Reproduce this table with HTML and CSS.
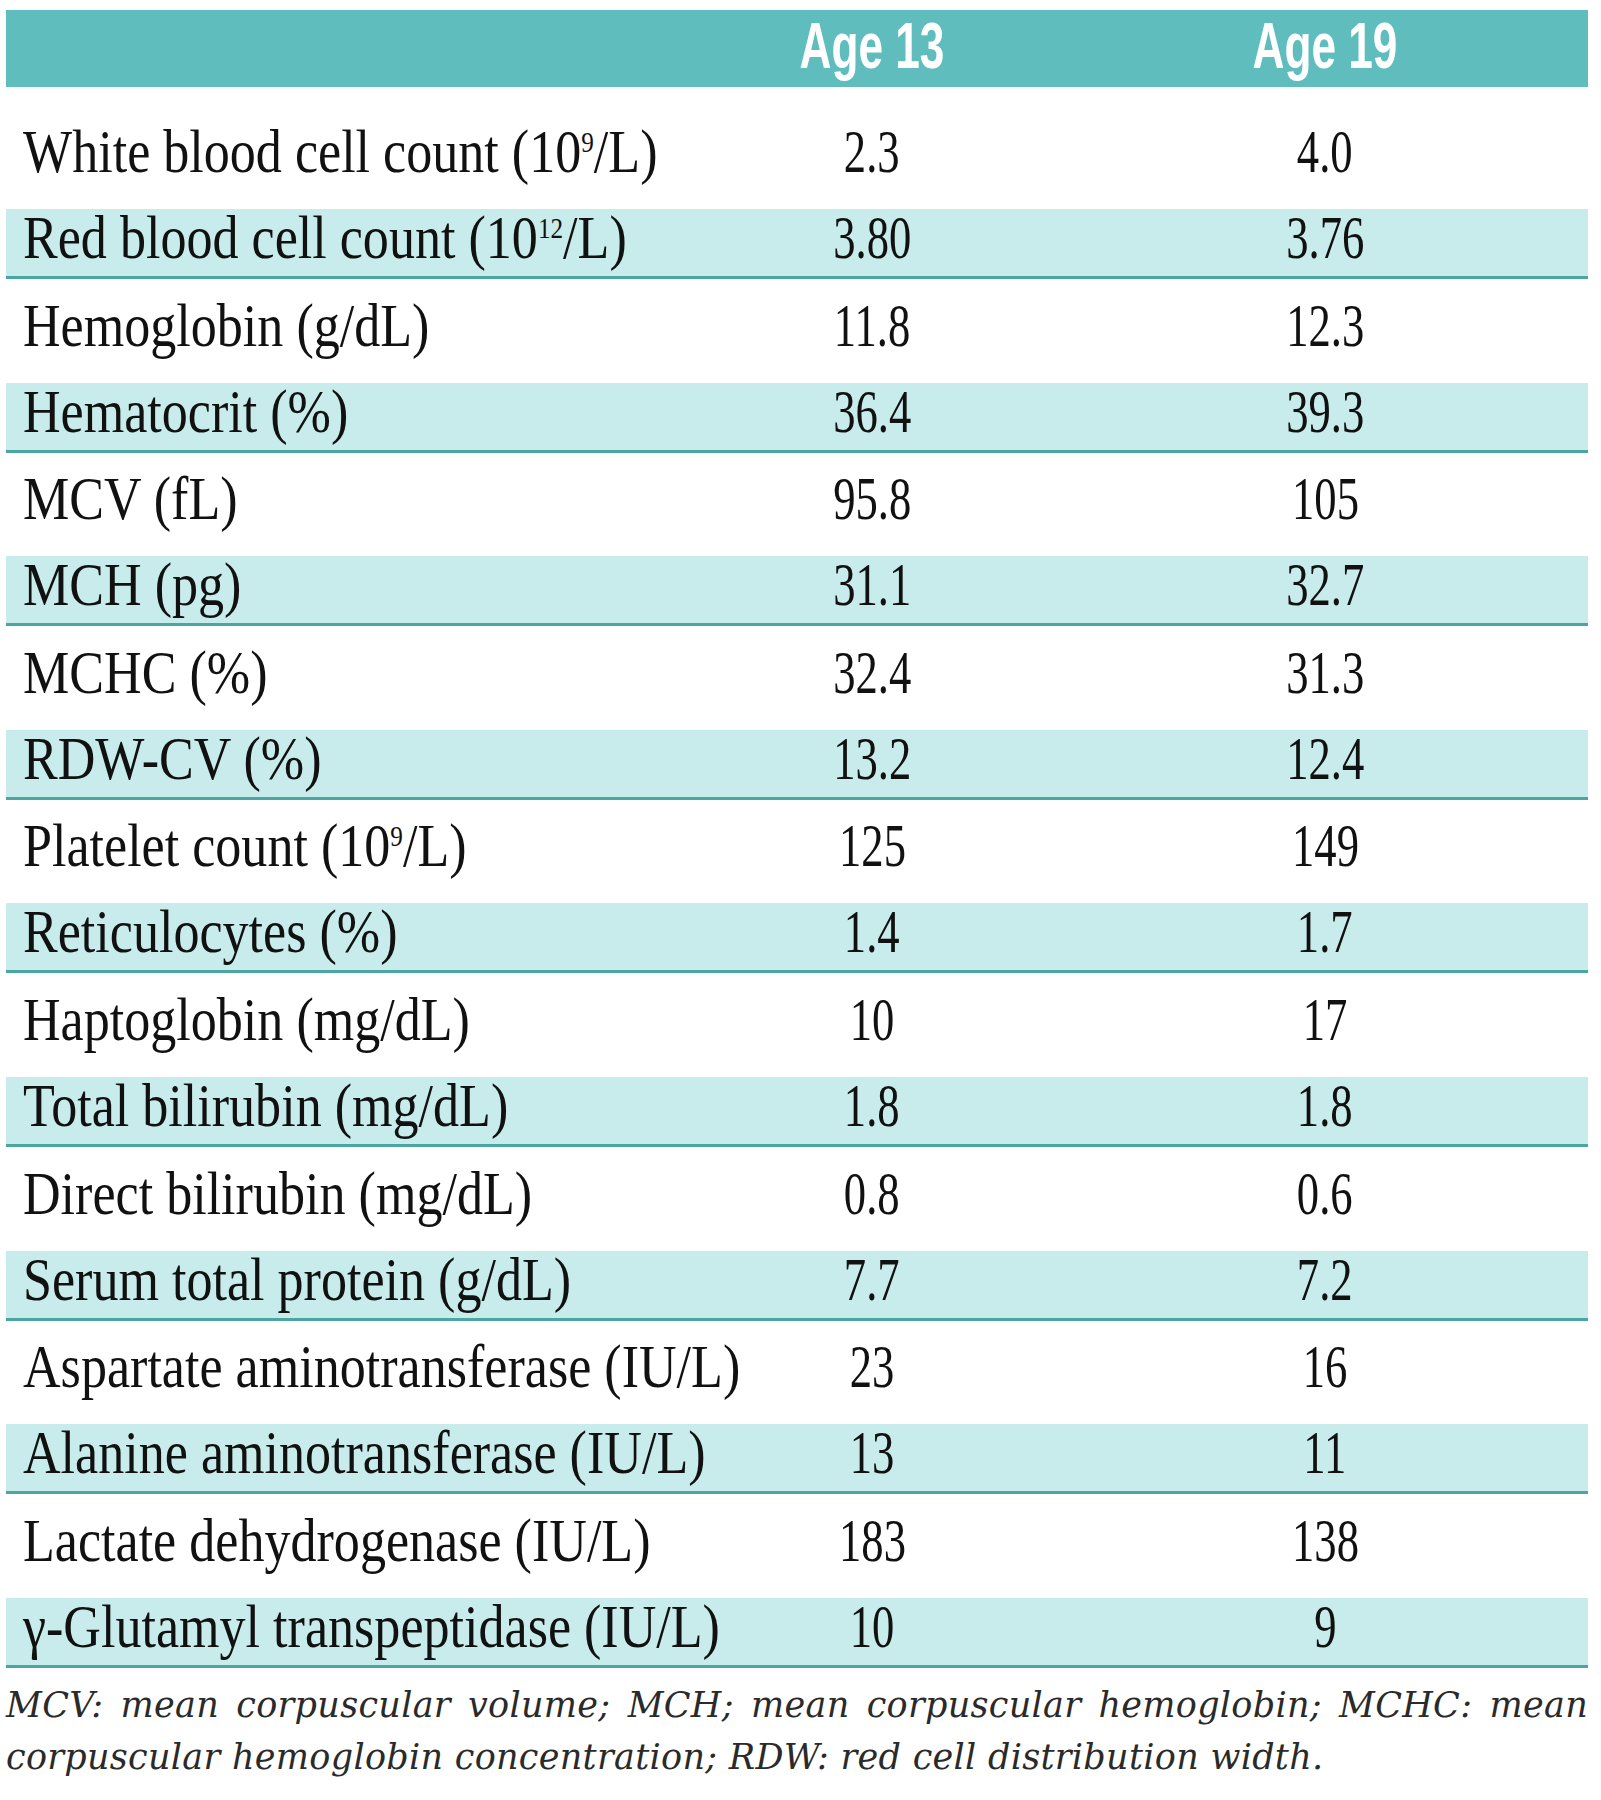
FILE: index.html
```html
<!DOCTYPE html>
<html>
<head>
<meta charset="utf-8">
<link rel="stylesheet" href="styles.css">
</head>
<body>
<div class="page">
  <div class="head">
    <div class="c"></div>
    <div class="c"><span>Age 13</span></div>
    <div class="c"><span>Age 19</span></div>
    <div class="c"></div>
  </div>
  <div class="row w"><div class="lab"><span>White blood cell count (10<sup>9</sup>/L)</span></div><div class="num"><span>2.3</span></div><div class="num"><span>4.0</span></div></div>
  <div class="row b"><div class="lab"><span>Red blood cell count (10<sup>12</sup>/L)</span></div><div class="num"><span>3.80</span></div><div class="num"><span>3.76</span></div></div>
  <div class="row w"><div class="lab"><span>Hemoglobin (g/dL)</span></div><div class="num"><span>11.8</span></div><div class="num"><span>12.3</span></div></div>
  <div class="row b"><div class="lab"><span>Hematocrit (%)</span></div><div class="num"><span>36.4</span></div><div class="num"><span>39.3</span></div></div>
  <div class="row w"><div class="lab"><span>MCV (fL)</span></div><div class="num"><span>95.8</span></div><div class="num"><span>105</span></div></div>
  <div class="row b"><div class="lab"><span>MCH (pg)</span></div><div class="num"><span>31.1</span></div><div class="num"><span>32.7</span></div></div>
  <div class="row w"><div class="lab"><span>MCHC (%)</span></div><div class="num"><span>32.4</span></div><div class="num"><span>31.3</span></div></div>
  <div class="row b"><div class="lab"><span>RDW-CV (%)</span></div><div class="num"><span>13.2</span></div><div class="num"><span>12.4</span></div></div>
  <div class="row w"><div class="lab"><span>Platelet count (10<sup>9</sup>/L)</span></div><div class="num"><span>125</span></div><div class="num"><span>149</span></div></div>
  <div class="row b"><div class="lab"><span>Reticulocytes (%)</span></div><div class="num"><span>1.4</span></div><div class="num"><span>1.7</span></div></div>
  <div class="row w"><div class="lab"><span>Haptoglobin (mg/dL)</span></div><div class="num"><span>10</span></div><div class="num"><span>17</span></div></div>
  <div class="row b"><div class="lab"><span>Total bilirubin (mg/dL)</span></div><div class="num"><span>1.8</span></div><div class="num"><span>1.8</span></div></div>
  <div class="row w"><div class="lab"><span>Direct bilirubin (mg/dL)</span></div><div class="num"><span>0.8</span></div><div class="num"><span>0.6</span></div></div>
  <div class="row b"><div class="lab"><span>Serum total protein (g/dL)</span></div><div class="num"><span>7.7</span></div><div class="num"><span>7.2</span></div></div>
  <div class="row w"><div class="lab"><span>Aspartate aminotransferase (IU/L)</span></div><div class="num"><span>23</span></div><div class="num"><span>16</span></div></div>
  <div class="row b"><div class="lab"><span>Alanine aminotransferase (IU/L)</span></div><div class="num"><span>13</span></div><div class="num"><span>11</span></div></div>
  <div class="row w"><div class="lab"><span>Lactate dehydrogenase (IU/L)</span></div><div class="num"><span>183</span></div><div class="num"><span>138</span></div></div>
  <div class="row b"><div class="lab"><span>γ-Glutamyl transpeptidase (IU/L)</span></div><div class="num"><span>10</span></div><div class="num"><span>9</span></div></div>
  <p class="note"><span class="l1">MCV: mean corpuscular volume; MCH; mean corpuscular hemoglobin; MCHC: mean</span><span class="l2">corpuscular hemoglobin concentration; RDW: red cell distribution width.</span></p>
</div>
</body>
</html>
```
FILE: styles.css
```css
html, body {
  margin: 0;
  padding: 0;
  background: #ffffff;
}

.page {
  width: 1582px;
  margin: 10px 0 0 6px;
}

.head,
.row {
  display: grid;
  grid-template-columns: 640px 452px 454px 1fr;
}

.head {
  height: 77px;
  background: #5fbdbd;
  margin-bottom: 18.4px;
  box-sizing: border-box;
  padding-bottom: 5px;
}

.head .c {
  color: #ffffff;
  font-family: "Liberation Sans", Arial, sans-serif;
  font-weight: bold;
  font-size: 64px;
  line-height: 72px;
  text-align: center;
  white-space: nowrap;
}

.head .c span {
  display: inline-block;
  transform: scaleX(0.69);
}

.row {
  font-family: "Liberation Serif", "Times New Roman", serif;
  font-size: 62px;
  line-height: 56px;
  color: #111111;
  white-space: nowrap;
  box-sizing: border-box;
}

.row > div {
  min-width: 0;
}

.row.w {
  height: 103.6px;
  padding-top: 17.7px;
}

.row.b {
  height: 70px;
  background: #c8ebeb;
  border-bottom: 3px solid #4ba6a2;
}

.lab {
  padding-left: 17px;
}

.lab span {
  display: inline-block;
  transform: scaleX(0.84);
  transform-origin: 0 50%;
}

.lab sup {
  font-size: 30px;
  vertical-align: 20px;
  line-height: 0;
}

.num {
  text-align: center;
}

.num span {
  display: inline-block;
  transform: scaleX(0.72);
}

.note {
  margin: 11px 0 0 0;
  font-family: "DejaVu Serif", serif;
  font-style: italic;
  font-size: 35px;
  line-height: 52px;
  letter-spacing: 0.3px;
  color: #2a2a2a;
}

.note .l1 {
  display: block;
  text-align: justify;
  text-align-last: justify;
  white-space: nowrap;
}

.note .l2 {
  display: block;
}
```
